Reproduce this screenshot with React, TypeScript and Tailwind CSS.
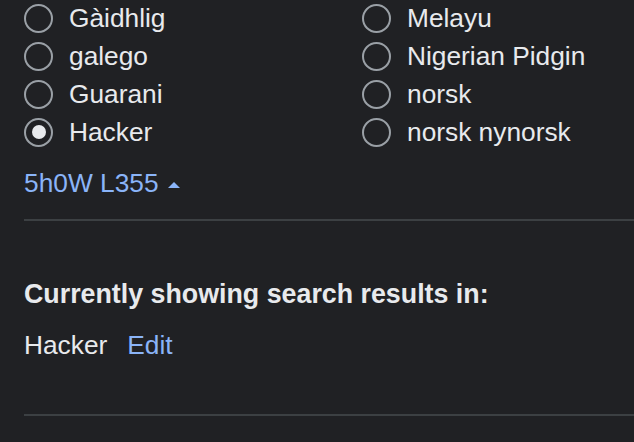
import React from 'react';

const leftLangs = [
  { label: 'Gàidhlig', checked: false },
  { label: 'galego', checked: false },
  { label: 'Guarani', checked: false },
  { label: 'Hacker', checked: true },
];

const rightLangs = [
  { label: 'Melayu', checked: false },
  { label: 'Nigerian Pidgin', checked: false },
  { label: 'norsk', checked: false },
  { label: 'norsk nynorsk', checked: false },
];

function Radio({ label, checked }: { label: string; checked: boolean }) {
  return (
    <div className="flex items-center h-[38px]">
      <span className="w-[29px] h-[29px] rounded-full border-2 border-[#9aa0a6] flex items-center justify-center shrink-0">
        {checked && <span className="w-[14px] h-[14px] rounded-full bg-[#e8eaed]" />}
      </span>
      <span className="ml-[16px] whitespace-nowrap">{label}</span>
    </div>
  );
}

export default function App() {
  return (
    <div
      className="w-[634px] h-[442px] overflow-hidden bg-[#202124] text-[#e8eaed] text-[26.3px] leading-[38px] pl-6"
      style={{ fontFamily: '"Liberation Sans", Arial, sans-serif' }}
    >
      {/* Language list */}
      <div className="grid grid-cols-[338px_1fr] -mt-[1px]">
        <div className="flex flex-col">
          {leftLangs.map((l) => (
            <Radio key={l.label} {...l} />
          ))}
        </div>
        <div className="flex flex-col">
          {rightLangs.map((l) => (
            <Radio key={l.label} {...l} />
          ))}
        </div>
      </div>

      <div className="mt-[13px] flex items-center text-[#8ab4f8]">
        <span>5h0W L355</span>
        <svg width="12" height="6" viewBox="0 0 12 6" className="ml-[9px] mt-[3px]">
          <path d="M0 6 L6 0 L12 6 Z" fill="#8ab4f8" />
        </svg>
      </div>

      <div className="mt-[17px] h-[2px] bg-[#3c4043]" />

      {/* Current search language */}
      <div className="mt-[54px] font-bold text-[26.8px]">Currently showing search results in:</div>
      <div className="mt-[13px] flex">
        <span>Hacker</span>
        <span className="ml-[20px] text-[#8ab4f8]">Edit</span>
      </div>

      <div className="mt-[50px] h-[2px] bg-[#3c4043]" />
    </div>
  );
}
